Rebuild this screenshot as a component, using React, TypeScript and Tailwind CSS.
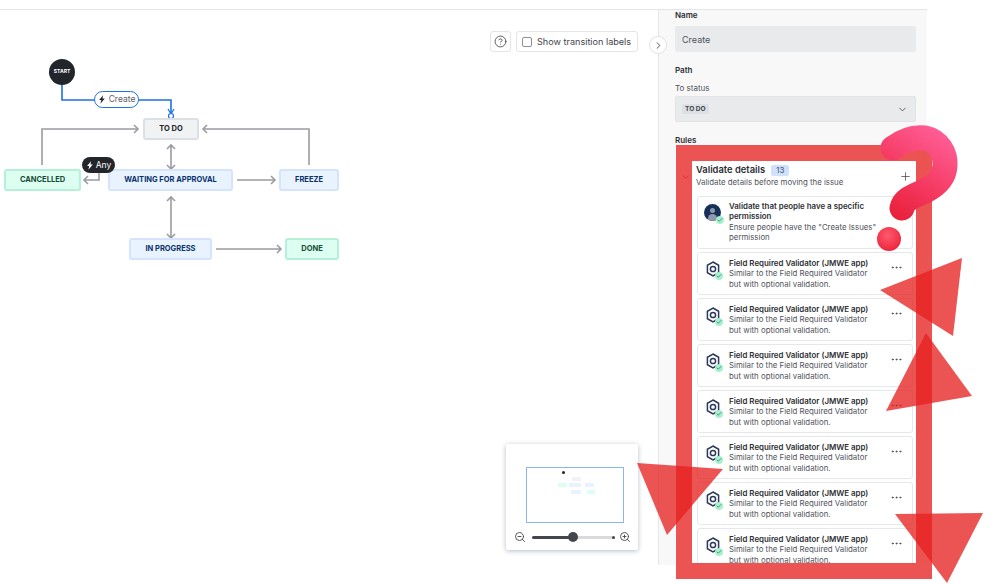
import React from 'react';
import { ChevronDown, ChevronRight, CircleHelp, Ellipsis, Check, Plus, ZoomIn, ZoomOut } from 'lucide-react';

const font = { fontFamily: 'Inter, "Noto Sans", sans-serif' };

const Bolt = ({ className }: { className: string }) => (
  <svg viewBox="0 0 12 14" className={className} fill="currentColor">
    <path d="M7.6 0.5 1.6 7.6h3.3L3.6 13.5l6.6-8H6.7z" />
  </svg>
);

const Status = ({ label, className }: { label: string; className: string }) => (
  <div className={`absolute flex items-center justify-center rounded-[3px] border-2 text-[7.5px] font-bold ${className}`}>{label}</div>
);

const Diagram = () => (
  <>
    <svg className="absolute inset-0 h-full w-full" viewBox="0 1 658 555" fill="none">
      <g stroke="#9a9ca3" strokeWidth="1.6">
        <path d="M42 156V120h95" />
        <path d="M134 116l4 4-4 4" />
        <path d="M309 156V120H204" />
        <path d="M207 116l-4 4 4 4" />
        <path d="M171 136v24M167 140l4-4 4 4M167 156l4 4 4-4" />
        <path d="M171 188v41M167 192l4-4 4 4M167 225l4 4 4-4" />
        <path d="M237 171h38M271 167l4 4-4 4" />
        <path d="M216 240h65M277 236l4 4-4 4" />
        <path d="M99 164v7H84M88 167l-4 4 4 4" />
      </g>
      <path d="M62 75v16h109v15" stroke="#1f6fe5" strokeWidth="1.6" />
      <path d="M168 100l3 5 3-5" stroke="#1f6fe5" strokeWidth="1.2" />
      <circle cx="171" cy="107" r="2.5" fill="#fff" stroke="#1f6fe5" strokeWidth="1.2" />
    </svg>

    <div className="absolute left-[49px] top-[49px] flex h-[26px] w-[26px] items-center justify-center rounded-full bg-[#22252a] text-[5px] font-bold text-white">START</div>

    <div className="absolute left-[94px] top-[81px] flex h-[17px] w-[45px] items-center justify-center gap-[3px] rounded-full border-[1.5px] border-[#1f6fe5] bg-white text-[8.5px] text-[#5e6068]">
      <Bolt className="h-[11px] w-[8px] text-[#22252a]" />
      Create
    </div>

    <Status label="TO DO" className="left-[143px] top-[108px] h-[22px] w-[56px] border-[#dcdfe4] bg-[#f1f2f4] text-[#22272b]" />
    <Status label="WAITING FOR APPROVAL" className="left-[108px] top-[159px] h-[22px] w-[125px] border-[#d5e3fb] bg-[#e9f2ff] text-[#09326c]" />
    <Status label="CANCELLED" className="left-[4px] top-[159px] h-[22px] w-[77px] border-[#b5f0d8] bg-[#dcfff1] text-[#164b35]" />
    <Status label="FREEZE" className="left-[279px] top-[159px] h-[22px] w-[60px] border-[#d5e3fb] bg-[#e9f2ff] text-[#09326c]" />
    <Status label="IN PROGRESS" className="left-[129px] top-[228px] h-[22px] w-[83px] border-[#d5e3fb] bg-[#e9f2ff] text-[#09326c]" />
    <Status label="DONE" className="left-[285px] top-[228px] h-[22px] w-[54px] border-[#b5f0d8] bg-[#dcfff1] text-[#164b35]" />

    <div className="absolute left-[82px] top-[147px] flex h-[16px] w-[33px] items-center justify-center gap-[2px] rounded-full bg-[#22252a] text-[8.5px] text-white">
      <Bolt className="h-[11px] w-[8px] text-white" />
      Any
    </div>
  </>
);

const Toolbar = () => (
  <div className="absolute left-[490px] top-[21px] flex items-center gap-[5px]">
    <div className="flex h-[21px] w-[21px] items-center justify-center rounded-[3px] border border-[#e4e5e8] bg-white">
      <CircleHelp className="h-[13px] w-[13px] text-[#44464d]" strokeWidth={1.6} />
    </div>
    <div className="flex h-[21px] w-[122px] items-center gap-[5px] rounded-[3px] border border-[#e4e5e8] bg-white pl-[5px] text-[9.1px] text-[#44464d]">
      <span className="h-[10px] w-[10px] rounded-[2px] border border-[#8c8f97]" />
      Show transition labels
    </div>
  </div>
);

const MiniMap = () => (
  <div className="absolute left-[506px] top-[434px] h-[106px] w-[132px] rounded-[2px] bg-white shadow-[0_1px_5px_rgba(9,30,66,0.3)]">
    <div className="relative ml-[20px] mt-[23px] h-[56px] w-[98px] border border-[#8fb5ef]">
      <span className="absolute left-[35px] top-[3px] h-[3px] w-[3px] rounded-full bg-[#22252a]" />
      <span className="absolute left-[45px] top-[9px] h-[4px] w-[9px] bg-[#f1f2f4]" />
      <span className="absolute left-[31px] top-[15px] h-[4px] w-[9px] bg-[#dcfff1]" />
      <span className="absolute left-[42px] top-[15px] h-[4px] w-[12px] bg-[#e9f2ff]" />
      <span className="absolute left-[58px] top-[15px] h-[4px] w-[9px] bg-[#e9f2ff]" />
      <span className="absolute left-[44px] top-[22px] h-[4px] w-[10px] bg-[#e9f2ff]" />
      <span className="absolute left-[60px] top-[22px] h-[4px] w-[8px] bg-[#dcfff1]" />
    </div>
    <div className="mt-[8px] flex items-center pl-[8px]">
      <ZoomOut className="h-[12px] w-[12px] text-[#44464d]" strokeWidth={1.8} />
      <div className="relative ml-[6px] h-[3px] w-[83px] rounded-full bg-[#d9dadd]">
        <div className="h-full w-[42px] rounded-full bg-[#44464d]" />
        <span className="absolute left-[36px] top-[-4px] h-[10px] w-[10px] rounded-full bg-[#44464d]" />
        <span className="absolute right-0 top-0 h-[3px] w-[3px] rounded-full bg-[#44464d]" />
      </div>
      <ZoomIn className="ml-[4px] h-[12px] w-[12px] text-[#44464d]" strokeWidth={1.8} />
    </div>
  </div>
);

const Tick = () => (
  <span className="absolute bottom-[-3px] right-[-3px] flex h-[8px] w-[8px] items-center justify-center rounded-full bg-[#a8efcf]">
    <Check className="h-[6px] w-[6px] text-[#1f845a]" strokeWidth={3} />
  </span>
);

const HexIcon = () => (
  <div className="relative mt-[3px] h-[16px] w-[14px] shrink-0">
    <svg viewBox="0 0 14 16" className="h-full w-full" fill="none" stroke="#2c3a5a" strokeWidth="1.5">
      <path d="M7 1l5.6 3.3v7.4L7 15l-5.6-3.3V4.3z" />
      <circle cx="7" cy="8" r="2.6" />
    </svg>
    <Tick />
  </div>
);

const Avatar = () => (
  <div className="relative mt-[3px] h-[17px] w-[17px] shrink-0">
    <div className="relative h-[17px] w-[17px] overflow-hidden rounded-full bg-[#17305a]">
      <span className="absolute left-[6px] top-[4px] h-[5px] w-[5px] rounded-full bg-[#8e99ab]" />
      <span className="absolute left-[4px] top-[10px] h-[8px] w-[9px] rounded-t-full bg-[#8e99ab]" />
    </div>
    <Tick />
  </div>
);

const RuleCard = () => (
  <div className="flex h-[43px] shrink-0 gap-[9px] rounded-[3px] border border-[#e6e7ea] bg-white pl-[8px] pt-[5px] leading-[10.4px]">
    <HexIcon />
    <div className="w-[152px] shrink-0">
      <div className="text-[7.9px] font-semibold text-[#2c2e33]">Field Required Validator (JMWE app)</div>
      <div className="text-[7.85px] text-[#50535b]">Similar to the Field Required Validator<br />but with optional validation.</div>
    </div>
    <Ellipsis className="mt-[3px] h-[13px] w-[13px] text-[#44464d]" strokeWidth={1.6} />
  </div>
);

const Panel = () => (
  <aside className="relative flex w-[269px] shrink-0 flex-col overflow-hidden border-l border-[#e6e7ea] bg-[#f8f8f8] pl-[16px] pr-[11px] text-[#2c2e33]">
    <div className="text-[8px] font-semibold leading-[10px]">Name</div>
    <div className="mt-[6px] flex h-[26px] items-center rounded-[2px] bg-[#e9eaec] pl-[7px] pt-[1px] text-[9px] text-[#50535b]">Create</div>
    <div className="mt-[13px] text-[8px] font-semibold leading-[10px]">Path</div>
    <div className="mt-[8px] text-[8px] leading-[10px] text-[#50535b]">To status</div>
    <div className="mt-[3px] flex h-[26px] items-center justify-between rounded-[2px] border border-[#e2e3e6] bg-[#e9eaec] pl-[6px] pr-[7px]">
      <span className="rounded-[2px] bg-[#dcdfe4] px-[3px] text-[6.6px] font-bold leading-[10px] text-[#44464d]">TO DO</span>
      <ChevronDown className="h-[11px] w-[11px] text-[#50535b]" />
    </div>
    <div className="mt-[13px] text-[8px] font-semibold leading-[10px]">Rules</div>
    <div className="mt-[2px] flex min-h-0 flex-1 flex-col overflow-hidden bg-white pl-[21px] pr-[3px] pt-[16px]">
      <div className="relative h-[33px] shrink-0">
        <ChevronDown className="absolute left-[-15px] top-[9px] h-[10px] w-[10px] text-[#c9393f]" />
        <div className="flex items-center gap-[6px] text-[9.4px] font-semibold leading-[14px]">
          Validate details
          <span className="rounded-[2px] bg-[#cfe1fb] px-[5px] text-[8px] font-normal leading-[11px] text-[#44546f]">13</span>
        </div>
        <div className="text-[7.85px] leading-[11px] text-[#50535b]">Validate details before moving the issue</div>
        <Plus className="absolute right-[1px] top-[7px] h-[13px] w-[13px] text-[#44464d]" strokeWidth={1.4} />
      </div>
      <div className="ml-[1px] flex flex-col gap-[3px]">
        <div className="flex h-[53px] shrink-0 gap-[8px] rounded-[3px] border border-[#e6e7ea] bg-white pl-[6px] pt-[4px] leading-[10.4px]">
          <Avatar />
          <div className="w-[160px]">
            <div className="text-[7.9px] font-semibold text-[#2c2e33]">Validate that people have a specific<br />permission</div>
            <div className="text-[7.85px] text-[#50535b]">Ensure people have the "Create Issues"<br />permission</div>
          </div>
        </div>
        {Array.from({ length: 7 }).map((_, i) => (
          <RuleCard key={i} />
        ))}
      </div>
    </div>
  </aside>
);

const Annotations = () => (
  <>
    <div className="absolute left-[676px] top-[145px] h-[434px] w-[256px] border-[16px] border-[rgba(230,32,32,0.77)]" />
    <svg className="absolute inset-0 h-full w-full" viewBox="0 0 999 584" fill="none">
      <defs>
        <linearGradient id="qm" gradientUnits="userSpaceOnUse" x1="950" y1="135" x2="895" y2="218">
          <stop offset="0" stopColor="#ff5f98" />
          <stop offset="0.55" stopColor="#f53a62" />
          <stop offset="1" stopColor="#e8203a" />
        </linearGradient>
        <radialGradient id="dot" cx="0.45" cy="0.35" r="0.7">
          <stop offset="0" stopColor="#ff5a70" />
          <stop offset="1" stopColor="#ea2238" />
        </radialGradient>
      </defs>
      <g fill="rgba(230,32,32,0.77)">
        <path d="M962 258 880 290 953 336z" />
        <path d="M926 333 972 396 886 411z" />
        <path d="M637 463 723 469 667 535z" />
        <path d="M895 514 983 513 947 583z" />
      </g>
      <path d="M893 148C905 139 917 137 925 138C939 141 946 154 945 166C944 180 933 187 925 191C914 196 904 199 902 208" stroke="url(#qm)" strokeWidth="25" strokeLinecap="round" />
      <circle cx="889" cy="239" r="12" fill="url(#dot)" />
    </svg>
  </>
);

export default function App() {
  return (
    <div className="relative h-[584px] w-[999px] overflow-hidden bg-white" style={font}>
      <div className="h-[9px] w-[927px]" />
      <div className="flex h-[556px] w-[927px] border-t border-[#e4e5e8]">
        <main className="relative w-[658px] shrink-0">
          <Diagram />
          <Toolbar />
          <MiniMap />
          <div className="absolute right-[-9px] top-[26px] z-10 flex h-[18px] w-[18px] items-center justify-center rounded-full border border-[#e1e2e5] bg-white">
            <ChevronRight className="h-[11px] w-[11px] text-[#44464d]" />
          </div>
        </main>
        <Panel />
      </div>
      <Annotations />
    </div>
  );
}
